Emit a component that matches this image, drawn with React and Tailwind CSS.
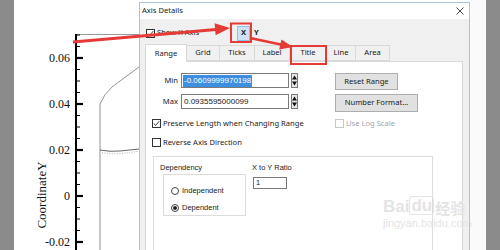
import React from 'react';

const ui = { fontFamily: '"Noto Sans", "Liberation Sans", sans-serif' };
const classic = { fontFamily: '"Liberation Sans", Arial, sans-serif' };
const serif = { fontFamily: '"Liberation Serif", "Times New Roman", serif' };

const Check = ({ checked, disabled }) => (
  <span
    className={`flex h-[9px] w-[9px] shrink-0 items-center justify-center border bg-white ${
      disabled ? 'border-[#c8c8c8]' : 'border-[#333]'
    }`}
  >
    {checked && (
      <svg width="7" height="7" viewBox="0 0 7 7">
        <path d="M0.8 3.6 L2.7 5.4 L6.2 1.2" fill="none" stroke="#222" strokeWidth="0.9" />
      </svg>
    )}
  </span>
);

const Radio = ({ on }) => (
  <span className="flex h-[8px] w-[8px] shrink-0 items-center justify-center rounded-full border border-[#444] bg-white">
    {on && <span className="h-[4px] w-[4px] rounded-full bg-[#222]" />}
  </span>
);

const Spinner = () => (
  <div className="flex h-[15px] w-[7px] flex-col items-center justify-center gap-[1px] border border-[#7a7a7a] bg-[#e6e6e6]">
    <svg width="5" height="5" viewBox="0 0 5 5"><path d="M2.5 0.5 L5 4.5 L0 4.5 Z" fill="#111" /></svg>
    <svg width="5" height="5" viewBox="0 0 5 5"><path d="M0 0.5 L5 0.5 L2.5 4.5 Z" fill="#111" /></svg>
  </div>
);

const tabs = [
  { label: 'Grid', w: 'w-[33px]' },
  { label: 'Ticks', w: 'w-[35px]' },
  { label: 'Label', w: 'w-[35px]' },
  { label: 'Title', w: 'w-[37px]' },
  { label: 'Line', w: 'w-[29px]' },
  { label: 'Area', w: 'w-[34px]' },
];

// y position of a value on the plot axis
const yOf = (v) => 196 - v * 2300;

const Plot = () => {
  const minor = [];
  for (let v = -0.025; v <= 0.0701; v += 0.005) minor.push(Number(v.toFixed(3)));
  const major = [0.06, 0.04, 0.02, 0, -0.02];
  const label = (v) => (v === 0 ? '0' : v.toFixed(2));

  return (
    <svg width="125" height="250" className="shrink-0" style={serif}>
      <line x1="62" y1="34.5" x2="125" y2="34.5" stroke="#9a9a9a" strokeWidth="1" />
      <line x1="62" y1="34" x2="62" y2="250" stroke="#000" strokeWidth="2" />
      {minor.map((v) => (
        <line key={v} x1="62" y1={yOf(v)} x2="66" y2={yOf(v)} stroke="#000" strokeWidth="1" />
      ))}
      {major.map((v) => (
        <g key={v}>
          <line x1="62" y1={yOf(v)} x2="69" y2={yOf(v)} stroke="#000" strokeWidth="2.2" />
          <text x="56" y={yOf(v) + 4} textAnchor="end" fontSize="12" fill="#111">
            {label(v)}
          </text>
        </g>
      ))}
      <text
        x="0"
        y="0"
        transform="translate(32 195) rotate(-90)"
        textAnchor="middle"
        fontSize="13"
        fill="#111"
      >
        CoordinateY
      </text>
      <path d="M86 250 L86 104 Q90 94 98 87 Q110 78 125 67" fill="none" stroke="#777" strokeWidth="0.8" />
      <path d="M86 150 Q96 152 106 151 Q116 150 125 149" fill="none" stroke="#555" strokeWidth="0.9" />
      <path d="M88 152.5 Q100 155 112 153 Q118 152 125 151.5" fill="none" stroke="#888" strokeWidth="0.7" strokeDasharray="1 1.5" />
    </svg>
  );
};

const Dialog = () => (
  <div className="mt-[2px] flex h-[260px] w-[331px] shrink-0 flex-col overflow-hidden border border-[#a7c4dd] bg-[#f0f0f0] text-[7.6px] text-[#222]" style={ui}>
    <div className="flex h-[16px] shrink-0 items-center justify-between bg-white pl-[2px] pr-[5px]">
      <span className="leading-none">Axis Details</span>
      <svg width="8" height="8" viewBox="0 0 8 8">
        <path d="M0.5 0.5 L7.5 7.5 M7.5 0.5 L0.5 7.5" stroke="#333" strokeWidth="0.9" />
      </svg>
    </div>

    <div className="mt-[6px] flex h-[16px] shrink-0 items-center pl-[6px]">
      <Check checked />
      <span className="ml-[2px] w-[80px] shrink-0">Show X Axis</span>
      <span className="flex h-[15px] w-[13px] shrink-0 items-center justify-center border border-[#8ec2ee] bg-[#cce4f7] font-bold leading-none">
        X
      </span>
      <span className="ml-[4px] font-bold leading-none">Y</span>
    </div>

    <div className="mt-[3px] flex shrink-0 items-end pl-[5px]">
      <div className="z-10 -mb-px flex h-[18px] w-[42px] items-center justify-center border border-b-0 border-[#d9d9d9] bg-white">
        Range
      </div>
      {tabs.map((t) => (
        <div
          key={t.label}
          className={`flex h-[16px] ${t.w} items-center justify-center border border-l-0 border-[#d9d9d9] bg-[#f0f0f0]`}
        >
          {t.label}
        </div>
      ))}
    </div>

    <div className="ml-[5px] flex min-h-0 w-[318px] flex-1 flex-col overflow-hidden border border-[#d9d9d9] bg-white">
      <div className="mt-[11px] flex shrink-0">
        <div className="flex flex-col gap-[6px]">
          {[
            { name: 'Min', value: '-0.0609999970198', sel: true },
            { name: 'Max', value: '0.0935595000099', sel: false },
          ].map((r) => (
            <div key={r.name} className="flex items-center">
              <span className="w-[32px] text-right">{r.name}</span>
              <div
                className="ml-[3px] flex h-[15px] w-[108px] items-center border border-[#7a7a7a] pl-[1px] text-[8px]"
                style={classic}
              >
                <span className={r.sel ? 'bg-[#3d8ee0] px-[1px] text-white' : 'px-[1px]'}>{r.value}</span>
              </div>
              <div className="ml-[2px]">
                <Spinner />
              </div>
            </div>
          ))}
        </div>
        <div className="ml-[37px] flex flex-col gap-[4px]">
          <div className="flex h-[17px] w-[63px] items-center justify-center border border-[#adadad] bg-[#e1e1e1]">
            Reset Range
          </div>
          <div className="flex h-[18px] w-[83px] items-center justify-center border border-[#adadad] bg-[#e1e1e1]">
            Number Format...
          </div>
        </div>
      </div>

      <div className="mt-[7px] flex h-[9px] shrink-0 items-center pl-[6px]">
        <Check checked />
        <span className="ml-[2px] w-[172px] shrink-0">Preserve Length when Changing Range</span>
        <Check disabled />
        <span className="ml-[2px] text-[#a5a5a5]">Use Log Scale</span>
      </div>

      <div className="mt-[10px] flex h-[9px] shrink-0 items-center pl-[6px]">
        <Check />
        <span className="ml-[2px]">Reverse Axis Direction</span>
      </div>

      <div className="ml-[7px] mt-[9px] flex h-[120px] w-[280px] shrink-0 border border-[#dcdcdc] pl-[6px] pt-[6px] text-[7.5px]" style={classic}>
        <div className="flex flex-col">
          <span className="h-[10px] leading-[10px]">Dependency</span>
          <div className="ml-[3px] mt-[1px] flex h-[42px] w-[83px] flex-col gap-[6px] border border-[#dcdcdc] pl-[7px] pt-[10px]">
            <div className="flex items-center gap-[3px]">
              <Radio />
              <span>Independent</span>
            </div>
            <div className="flex items-center gap-[3px]">
              <Radio on />
              <span>Dependent</span>
            </div>
          </div>
        </div>
        <div className="ml-[6px] flex flex-col">
          <span className="h-[10px] leading-[10px]">X to Y Ratio</span>
          <div className="ml-[1px] mt-[4px] flex h-[12px] w-[34px] items-center border border-[#7a7a7a] pl-[2px]">1</div>
        </div>
      </div>
    </div>
  </div>
);

const Overlay = () => (
  <svg width="500" height="250" className="pointer-events-none absolute left-0 top-0">
    <rect x="231" y="23.5" width="20" height="18.5" fill="none" stroke="#e53a35" strokeWidth="2" />
    <rect x="291" y="46" width="35" height="18" fill="none" stroke="#e53a35" strokeWidth="2" />
    <line x1="73" y1="42" x2="216" y2="29.5" stroke="#e53a35" strokeWidth="3" />
    <polygon points="230,28 215.6,35.3 214.6,23.3" fill="#e53a35" />
    <line x1="250" y1="38" x2="282" y2="44.7" stroke="#e53a35" strokeWidth="2.5" />
    <polygon points="293,47 279.2,49.6 281.4,39.6" fill="#e53a35" />
  </svg>
);

const Watermark = () => (
  <div className="pointer-events-none absolute left-[383px] top-[196px] flex flex-col text-[#e4e4e4]" style={classic}>
    <div className="flex items-end">
      <span className="text-[17px] font-bold leading-none">Bai</span>
      <span className="relative rounded-[3px] border border-[#e4e4e4] px-[1px] text-[17px] font-bold leading-none">
        du
      </span>
      <span className="ml-[1px] text-[15px] font-bold leading-none" style={{ fontFamily: '"Noto Sans CJK SC", sans-serif' }}>
        经验
      </span>
    </div>
    <span className="mt-[3px] text-[11px] leading-none">jingyan.baidu.com</span>
  </div>
);

export default function App() {
  return (
    <div className="relative flex h-[250px] w-[500px] overflow-hidden bg-white">
      <div className="w-[14px] shrink-0 bg-[#8b8b8b]" />
      <Plot />
      <Dialog />
      <div className="w-[16px] shrink-0 bg-[#fafafa]" />
      <div className="flex-1 bg-[#8b8b8b]" />
      <Watermark />
      <Overlay />
    </div>
  );
}
